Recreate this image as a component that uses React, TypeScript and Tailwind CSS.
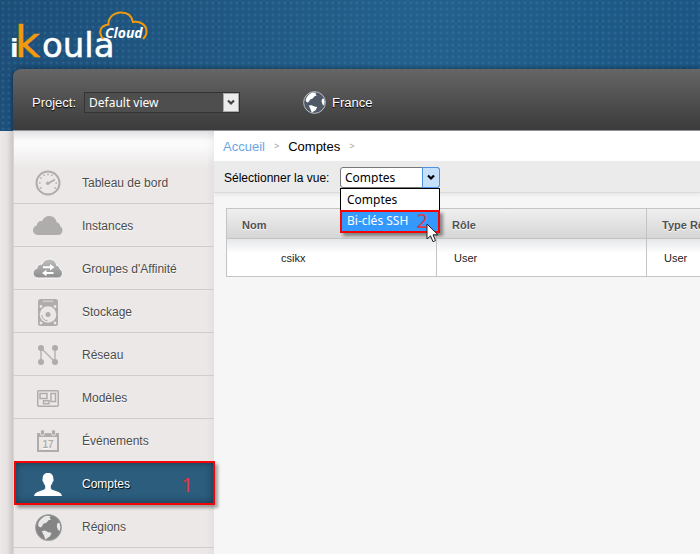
import type { ReactNode } from "react";

const MUTED = "#afadac";

function CloudShape({ fill }: { fill: string }) {
  return (
    <path
      fill={fill}
      d="M5.5 19C2.5 19 0 17 0 14.2c0-2.6 1.8-4.3 3.8-4.7C4 6.400 6.500 4.700 9 5.200 10.200 2 13 0 16.300 0c4 0 6.900 2.800 7.300 6.300 2.200.5 3.400 2 3.500 3.900 1.600.7 2.400 2.300 2.400 4 0 2.800-2 4.800-4.700 4.800z"
    />
  );
}

function GaugeIcon() {
  return (
    <svg width="26" height="26" viewBox="0 0 26 26" fill="none" stroke={MUTED} aria-hidden="true">
      <circle cx="13" cy="13" r="11.500" strokeWidth="2" />
      <path
        d="M6.500 17.500l-1.300.8M5.500 13H4M6.500 8.500l-1.200-.8M9.500 5.800l-.7-1.200M13 5.200V3.700M16.500 5.800l.7-1.200M20.500 13H22M19.500 17.500l1.300.8"
        strokeWidth="1.500"
      />
      <path d="M13 13.500 20 9.500" strokeWidth="1.700" />
      <circle cx="12.800" cy="13.300" r="1.800" fill={MUTED} stroke="none" />
    </svg>
  );
}

function CloudIcon() {
  return (
    <svg width="30" height="20" viewBox="0 0 30 20" aria-hidden="true">
      <CloudShape fill={MUTED} />
    </svg>
  );
}

function AffinityIcon() {
  return (
    <svg width="32" height="22" viewBox="-1 -1 32 22" aria-hidden="true">
      <defs>
        <linearGradient id="affinity" x1="0" y1="0" x2="0" y2="1">
          <stop offset="0" stopColor="#bdbdbd" />
          <stop offset="1" stopColor="#8e8e8e" />
        </linearGradient>
      </defs>
      <g stroke="#fbfbfb" strokeWidth="1">
        <CloudShape fill="url(#affinity)" />
      </g>
      <path fill="#fff" d="M10 7.200h7V5l4.500 3.200-4.500 3.200V9.200h-7zM20.500 15h-7v2.200L9 14l4.500-3.200V13h7z" />
    </svg>
  );
}

function DiskIcon() {
  return (
    <svg width="20" height="27" viewBox="0 0 20 27" aria-hidden="true">
      <rect width="20" height="27" rx="2.500" fill={MUTED} />
      <rect x="5" y="1.500" width="10" height="1.500" fill="#d0cecd" />
      <g fill="#ebe8e7">
        <circle cx="3" cy="7.500" r="1.400" />
        <circle cx="17" cy="7.500" r="1.400" />
        <circle cx="3" cy="24" r="1.400" />
        <circle cx="17" cy="24" r="1.400" />
        <circle cx="10" cy="15.500" r="8.300" />
      </g>
      <circle cx="10" cy="15.500" r="2.500" fill={MUTED} />
      <path d="M3.800 16a6.200 6.200 0 0 0 5.700 5.700" fill="none" stroke={MUTED} />
    </svg>
  );
}

function NetworkIcon() {
  return (
    <svg width="20" height="20" viewBox="0 0 20 20" fill={MUTED} aria-hidden="true">
      <path d="M3 17V3l14 14V3" fill="none" stroke={MUTED} strokeWidth="1.300" />
      <circle cx="3" cy="3" r="3" />
      <circle cx="17" cy="3" r="3" />
      <circle cx="3" cy="17" r="3" />
      <circle cx="17" cy="17" r="3" />
    </svg>
  );
}

function TemplateIcon() {
  return (
    <svg width="22" height="17" viewBox="0 0 22 17" fill="none" stroke={MUTED} strokeWidth="1.500" aria-hidden="true">
      <rect x="0.750" y="0.750" width="20.500" height="15.500" rx="1" />
      <rect x="3" y="3.500" width="7" height="5" />
      <rect x="14" y="3.500" width="4.500" height="8" />
      <rect x="6.500" y="10.700" width="5.500" height="3" />
    </svg>
  );
}

function CalendarIcon() {
  return (
    <svg width="22" height="22" viewBox="0 0 22 22" aria-hidden="true">
      <path d="M1 4h20v17H1z" fill="none" stroke={MUTED} strokeWidth="2" />
      <path d="M1 3h20v4H1z" fill={MUTED} />
      <g fill={MUTED} stroke="#ebe8e7">
        <rect x="3.500" y="-0.500" width="4" height="6" rx="2" />
        <rect x="14.500" y="-0.500" width="4" height="6" rx="2" />
      </g>
      <text x="11" y="17.500" textAnchor="middle" fontSize="10" fontWeight="700" fontFamily="Liberation Sans, sans-serif" fill={MUTED}>
        17
      </text>
    </svg>
  );
}

function PersonIcon() {
  return (
    <svg width="28" height="23" viewBox="0 0 28 23" fill="#fff" aria-hidden="true">
      <path d="M14 0c3.500 0 5.300 2 5.300 5.300 0 .8.400 1 .3 2-.1 1-.8 1.200-1.100 2.200-.4 1.500-1.300 2.500-1.700 3.200v2.500c.5 1.500 3 2 5.700 3 3 1.100 5 2 5.500 4.800H0c.5-2.800 2.500-3.700 5.500-4.800 2.700-1 5.200-1.500 5.700-3v-2.500c-.4-.7-1.300-1.700-1.700-3.200-.3-1-1-1.200-1.100-2.200-.1-1 .3-1.200.3-2C8.700 2 10.500 0 14 0z" />
    </svg>
  );
}

function GlobeIcon({ size, sea, land, rim }: { size: number; sea: string; land: string; rim: string }) {
  return (
    <svg width={size} height={size} viewBox="0 0 26 26" aria-hidden="true">
      <circle cx="13" cy="13" r="12.300" fill={sea} stroke={rim} />
      <path
        fill={land}
        d="M3 10C4 6 7 3 11 1.800l4 .2-1 1.500 1.500 1.700-2.500.8-2 2.500-3 1-1 2-1.500 1.500L3.500 12zM6.500 16.500l3-.5 3.500 1.500 3 .5-1.500 3.500-3 2-1.500 1-1.500-4zM21.500 9l2-.5 1 4-.8 4-1.700-1.500-1-3z"
      />
    </svg>
  );
}

function Chevron({ color }: { color: string }) {
  return (
    <svg width="8" height="7" viewBox="0 0 8 7" aria-hidden="true">
      <path d="M1 1.500 4 4.500 7 1.500" fill="none" stroke={color} strokeWidth="2.200" />
    </svg>
  );
}

function Logo() {
  return (
    <svg width="160" height="69" viewBox="0 0 160 69" role="img" aria-label="iKoula Cloud" fontFamily="DejaVu Sans, sans-serif">
      <text x="10" y="57" fontSize="25" fontWeight="700" fill="#fff">
        i
        <tspan x="15" fontSize="43" fontWeight="400" fill="#f39a0b" stroke="#f39a0b" strokeWidth="0.500">k</tspan>
        <tspan x="42" fontSize="34" fontWeight="400" stroke="#fff" strokeWidth="0.500">oula</tspan>
      </text>
      <path
        d="M103 39C98 32 100 25.500 108.500 24.500 108 17.500 114 12.500 121 12.500c7 0 11 4 12 9.500 7-1.500 13 3 13.500 8.500.2 3-.8 6-3.500 8.500"
        fill="none"
        stroke="#f39a0b"
        strokeWidth="2"
      />
      <text x="105" y="38" fontSize="14" fontWeight="700" fontStyle="italic" fontFamily="Open Sans, sans-serif" fill="#fff">
        Cloud
      </text>
    </svg>
  );
}

function Toolbar() {
  return (
    <div className="flex h-[62px] items-center rounded-tl-lg border-b border-[#8e939b] bg-linear-to-b from-[#666] to-[#3b3b3b] pt-[6px] pl-[19px] text-[13px] text-white shadow-[0_0_5px_#0008]">
      <label htmlFor="project" className="w-[52px] [text-shadow:0_1px_1px_#000]">
        Project:
      </label>
      <div className="relative flex">
        <select
          id="project"
          className="h-[21px] w-[156px] appearance-none border border-[#333] bg-[#4e4e4e] pl-1 font-['Noto_Sans',sans-serif] text-xs leading-none text-white"
        >
          <option>Default view</option>
        </select>
        <span className="pointer-events-none absolute inset-y-px right-px flex w-4 items-center justify-center border border-[#aaa] bg-[#ececec]">
          <Chevron color="#444" />
        </span>
      </div>
      <button type="button" className="ml-[63px] flex items-center gap-[6px] [text-shadow:0_1px_1px_#000]">
        <GlobeIcon size={23} sea="#505a67" land="#fff" rim="#c5ccd2" />
        France
      </button>
    </div>
  );
}

type Item = { label: string; icon: ReactNode; active?: boolean };

const items: Item[] = [
  { label: "Tableau de bord", icon: <GaugeIcon /> },
  { label: "Instances", icon: <CloudIcon /> },
  { label: "Groupes d'Affinité", icon: <AffinityIcon /> },
  { label: "Stockage", icon: <DiskIcon /> },
  { label: "Réseau", icon: <NetworkIcon /> },
  { label: "Modèles", icon: <TemplateIcon /> },
  { label: "Événements", icon: <CalendarIcon /> },
  { label: "Comptes", icon: <PersonIcon />, active: true },
  { label: "Régions", icon: <GlobeIcon size={27} sea="#858585" land="#e8e8e8" rim="#999" /> },
];

function Sidebar() {
  return (
    <nav className="relative z-10 w-[201px] shrink-0 border-l border-[#d8d5d4] bg-[linear-gradient(to_left,#0000000a,transparent_8px),linear-gradient(to_bottom,#e3e1e1,#fbfbfb_10px,#fafafa_16px,#ebe8e7_38px)] pt-[30px]">
      <ul>
        {items.map((item) => (
          <li key={item.label} className="relative border-b border-[#cfcdcc]">
            <a
              href="#"
              className={
                item.active
                  ? "flex h-[42px] items-center bg-[#2c5d7c] pt-[2px] text-xs text-white shadow-[inset_0_0_9px_#0f2c40] [text-shadow:1px_1px_1px_#000]"
                  : "flex h-[42px] items-center pt-[2px] text-xs text-[#4c4c4c] [text-shadow:0_1px_1px_#fff]"
              }
            >
              <span className="flex w-[68px] items-center justify-center">{item.icon}</span>
              <span>{item.label}</span>
            </a>
            {item.active && (
              <div className="pointer-events-none absolute -top-px -right-px -bottom-px left-0 flex items-center justify-end border-2 border-[#f40404] pt-1 pr-5 font-['Noto_Sans',sans-serif] text-xl text-[#f22f38] shadow-[3px_3px_3px_#0005]">
                1
              </div>
            )}
          </li>
        ))}
      </ul>
    </nav>
  );
}

function ViewSelect() {
  return (
    <div className="relative font-['Noto_Sans',sans-serif] text-xs text-black">
      <select
        id="view"
        className="block h-[21px] w-[100px] appearance-none rounded-[3px] border border-[#777] bg-white pl-1 text-xs leading-none"
      >
        <option>Comptes</option>
        <option>Bi-clés SSH</option>
      </select>
      <span className="pointer-events-none absolute inset-y-0 right-0 flex w-[18px] items-center justify-center rounded-r-[3px] border border-[#4d94e0] bg-[#c6e0fa]">
        <Chevron color="#000" />
      </span>
      <ul className="absolute top-[21px] left-0 z-10 w-[100px] border border-black bg-white leading-[21px]">
        <li className="pl-[6px]">Comptes</li>
        <li className="relative -mx-px -mb-px flex h-[23px] items-center border-2 border-[#f40404] bg-[#3399ff] pb-[2px] pl-[5px] text-white shadow-[3px_3px_3px_#0006]">
          Bi-clés SSH
          <span className="absolute right-[10px] text-xl text-[#d83a4c]">2</span>
          <svg className="absolute top-[11px] left-[84px]" width="13" height="21" viewBox="0 0 13 21" aria-hidden="true">
            <path d="M1 1v15l3.500-3.200L7 18.700l2.500-1.100L7 11.800h5z" fill="#fff" stroke="#222" />
          </svg>
        </li>
      </ul>
    </div>
  );
}

function AccountsTable() {
  return (
    <table className="w-full min-w-[630px] table-fixed border-collapse bg-white text-left text-[11px] text-[#222]">
      <thead>
        <tr className="h-[30px] bg-linear-to-b from-[#efefef] to-[#d5d5d5] text-[#525252] [text-shadow:0_1px_1px_#fff]">
          <th className="w-[210px] border border-[#c4c4c4] pt-1 pl-[15px]">Nom</th>
          <th className="w-[210px] border border-[#c4c4c4] pt-1 pl-[15px]">Rôle</th>
          <th className="border border-[#c4c4c4] pt-1 pl-[15px]">Type Rôle</th>
        </tr>
      </thead>
      <tbody>
        <tr className="h-[38px] bg-[linear-gradient(to_bottom,#e4e7ea,#fff_14px)]">
          <td className="border border-[#c4c4c4] pt-[2px] pl-[54px]">csikx</td>
          <td className="border border-[#c4c4c4] pt-[2px] pl-[17px]">User</td>
          <td className="border border-[#c4c4c4] pt-[2px] pl-[17px]">User</td>
        </tr>
      </tbody>
    </table>
  );
}

export default function App() {
  return (
    <div className="flex min-h-screen flex-col overflow-hidden bg-[#e8e5e4] font-['Liberation_Sans',Arial,sans-serif]">
      <header className="bg-[radial-gradient(circle,#5b9cc82e_1px,transparent_2px),linear-gradient(100deg,#1c4e78,#23618c_60%,#1b5583)] bg-[size:6px_6px,100%_100%] pl-[13px]">
        <div className="-ml-[13px] h-[69px]">
          <Logo />
        </div>
        <Toolbar />
      </header>
      <div className="flex grow bg-[linear-gradient(to_right,#ebe8e7,#e5e2e1_7px,#c9c6c5_13px)] pl-[13px]">
        <Sidebar />
        <main className="min-w-0 grow overflow-hidden bg-[#f6f6f6]">
          <nav aria-label="Fil d'Ariane" className="flex h-[30px] items-center gap-[9px] bg-white pt-[2px] pl-[9px] text-[13px]">
            <a href="#" className="text-[#6aa5e3]">Accueil</a>
            <span className="text-[9px] text-[#a5a5a5]">&gt;</span>
            <span className="text-black">Comptes</span>
            <span className="text-[9px] text-[#a5a5a5]">&gt;</span>
          </nav>
          <div className="flex h-[32px] items-center border-b border-[#dcdcdc] bg-[#ebebeb] pt-[2px] pl-[10px] text-xs text-black shadow-[0_2px_4px_#0001]">
            <label htmlFor="view" className="w-[116px]">Sélectionner la vue:</label>
            <ViewSelect />
          </div>
          <div className="px-3 pt-[15px]">
            <AccountsTable />
          </div>
        </main>
      </div>
    </div>
  );
}
